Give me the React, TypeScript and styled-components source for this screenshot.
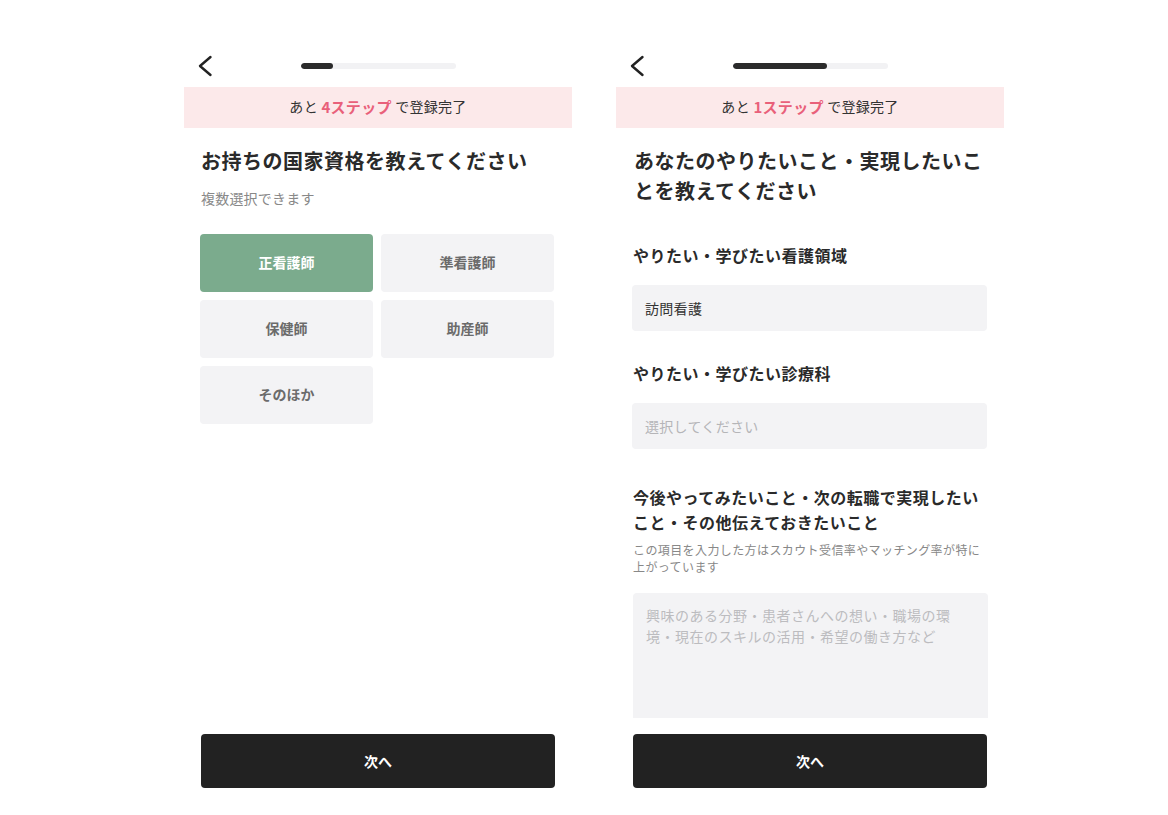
import React from "react";
import styled, { createGlobalStyle } from "styled-components";

const Global = createGlobalStyle`
  html, body { margin: 0; padding: 0; background: #ffffff; }
  body { font-family: "Noto Sans CJK JP", "Noto Sans", sans-serif; color: #222; }
  * { box-sizing: border-box; }
`;

const Page = styled.div`
  display: flex;
  gap: 44px;
  padding: 44px 0 0 184px;
  height: 815px;
  overflow: hidden;
`;

const Panel = styled.div`
  width: 388px;
  height: 771px;
  display: flex;
  flex-direction: column;
`;

const Header = styled.div`
  height: 43px;
  flex-shrink: 0;
  display: grid;
  grid-template-columns: 1fr 155px 1fr;
  align-items: center;
`;

const Back = styled.div`
  padding-left: 13px;
  display: flex;
  align-items: center;
`;

const Track = styled.div`
  height: 6px;
  border-radius: 3px;
  background: #f2f2f4;
  overflow: hidden;
`;

const Fill = styled.div`
  height: 100%;
  border-radius: 3px;
  background: #2b2b2b;
`;

const Banner = styled.div`
  height: 41px;
  flex-shrink: 0;
  background: #fce9ea;
  display: flex;
  align-items: center;
  justify-content: center;
  padding-bottom: 3px;
  font-size: 14px;
  color: #333;
  letter-spacing: 0.3px;
  white-space: pre;
`;

const Accent = styled.span`
  color: #e9607a;
  font-weight: 700;
  font-size: 15px;
`;

const Content = styled.div<{ $left: number }>`
  flex: 1;
  min-height: 0;
  overflow: hidden;
  padding: 18px 17px 0 ${(p) => p.$left}px;
  display: flex;
  flex-direction: column;
`;

const Title = styled.h1<{ $indent: number }>`
  margin: 0 0 0 ${(p) => p.$indent}px;
  flex-shrink: 0;
  font-size: 20px;
  line-height: 30px;
  font-weight: 700;
  letter-spacing: 0.5px;
  color: #2a2a2a;
`;

const Sub = styled.p`
  margin: 12px 0 0 1px;
  font-size: 14px;
  line-height: 20px;
  color: #888;
  letter-spacing: 0.2px;
`;

const Grid = styled.div`
  margin-top: 26px;
  display: grid;
  grid-template-columns: 173px 173px;
  gap: 8px;
`;

const Choice = styled.div<{ $on?: boolean }>`
  height: 58px;
  border-radius: 4px;
  display: flex;
  align-items: center;
  justify-content: center;
  font-size: 14px;
  font-weight: 700;
  padding-bottom: 2px;
  background: ${(p) => (p.$on ? "#7bab8d" : "#f3f3f5")};
  color: ${(p) => (p.$on ? "#ffffff" : "#6b6b6b")};
`;

const Label = styled.div<{ $top: number }>`
  margin: ${(p) => p.$top}px 0 0 1px;
  flex-shrink: 0;
  font-size: 16px;
  line-height: 25px;
  font-weight: 700;
  letter-spacing: 0.5px;
  color: #2a2a2a;
`;

const Field = styled.div<{ $placeholder?: boolean }>`
  margin-top: 17px;
  height: 46px;
  flex-shrink: 0;
  border-radius: 4px;
  background: #f3f3f5;
  display: flex;
  align-items: center;
  padding-left: 13px;
  font-size: 14px;
  letter-spacing: 0.3px;
  color: ${(p) => (p.$placeholder ? "#b5b5b8" : "#333")};
`;

const Note = styled.p`
  margin: 6px 0 0 1px;
  flex-shrink: 0;
  font-size: 12px;
  line-height: 17px;
  color: #888;
  letter-spacing: 0.4px;
`;

const Area = styled.div`
  margin: 18px -1px 0 1px;
  flex: 1 0 200px;
  border-radius: 4px 4px 0 0;
  background: #f3f3f5;
  padding: 12px 13px;
  font-size: 14px;
  line-height: 21px;
  letter-spacing: 0.5px;
  color: #bcbcbf;
`;

const Line = styled.span`
  display: block;
  white-space: nowrap;
`;

const Footer = styled.div`
  flex-shrink: 0;
  padding: 16px 17px 27px 17px;
`;

const Next = styled.div`
  height: 54px;
  border-radius: 4px;
  background: #222222;
  color: #fff;
  font-size: 14px;
  font-weight: 700;
  display: flex;
  align-items: center;
  justify-content: center;
`;

const Chevron = () => (
  <svg width="16" height="22" viewBox="0 0 16 22" fill="none">
    <path d="M13.5 2 L3 11 L13.5 20" stroke="#222" strokeWidth="2.4" strokeLinecap="round" strokeLinejoin="round" />
  </svg>
);

const Top: React.FC<{ progress: number; remain: string }> = ({ progress, remain }) => (
  <>
    <Header>
      <Back>
        <Chevron />
      </Back>
      <Track>
        <Fill style={{ width: `${progress}%` }} />
      </Track>
      <div />
    </Header>
    <Banner>
      あと <Accent>{remain}ステップ</Accent> で登録完了
    </Banner>
  </>
);

export default function App() {
  return (
    <>
      <Global />
      <Page>
        <Panel>
          <Top progress={21} remain="4" />
          <Content $left={16}>
            <Title $indent={1}>お持ちの国家資格を教えてください</Title>
            <Sub>複数選択できます</Sub>
            <Grid>
              <Choice $on>正看護師</Choice>
              <Choice>準看護師</Choice>
              <Choice>保健師</Choice>
              <Choice>助産師</Choice>
              <Choice>そのほか</Choice>
            </Grid>
          </Content>
          <Footer>
            <Next>次へ</Next>
          </Footer>
        </Panel>
        <Panel>
          <Top progress={61} remain="1" />
          <Content $left={16}>
            <Title $indent={2}>あなたのやりたいこと・実現したいことを教えてください</Title>
            <Label $top={37}>やりたい・学びたい看護領域</Label>
            <Field>訪問看護</Field>
            <Label $top={30}>やりたい・学びたい診療科</Label>
            <Field $placeholder>選択してください</Field>
            <Label $top={36}>今後やってみたいこと・次の転職で実現したいこと・その他伝えておきたいこと</Label>
            <Note>この項目を入力した方はスカウト受信率やマッチング率が特に上がっています</Note>
            <Area>
              <Line>興味のある分野・患者さんへの想い・職場の環</Line>
              <Line>境・現在のスキルの活用・希望の働き方など</Line>
            </Area>
          </Content>
          <Footer>
            <Next>次へ</Next>
          </Footer>
        </Panel>
      </Page>
    </>
  );
}
